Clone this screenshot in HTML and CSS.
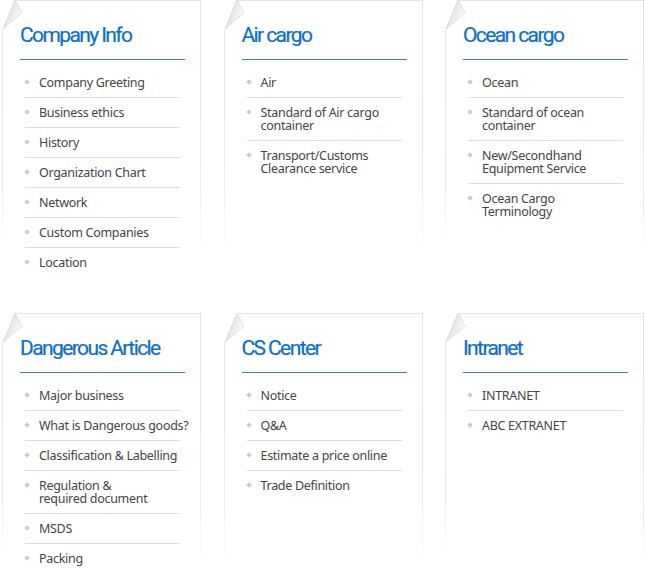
FILE: index.html
```html
<!DOCTYPE html>
<html lang="en">
<head>
    <meta charset="UTF-8">
    <meta name="viewport" content="width=device-width, initial-scale=1.0">
    <title>Sitemap</title>
    <link rel="stylesheet" href="styles.css">
</head>
<body>
    <div class="sitemap">
        <div class="card">
            <svg class="curl" width="21" height="30" viewBox="0 0 21 30"><defs><linearGradient id="fold1" x1="0" y1="0" x2="1" y2="0.6"><stop offset="0" stop-color="#a9a9a9"/><stop offset="0.45" stop-color="#e4e4e4"/><stop offset="1" stop-color="#fff"/></linearGradient></defs><polygon points="0,0 14,0 1,29 0,30" fill="#fff"/><polygon points="13,0 20,13 1,29" fill="url(#fold1)" stroke="#d4d4d4" stroke-width="0.7"/></svg>
            <h2>Company Info</h2>
            <ul>
                <li>Company Greeting</li>
                <li>Business ethics</li>
                <li>History</li>
                <li>Organization Chart</li>
                <li>Network</li>
                <li>Custom Companies</li>
                <li>Location</li>
            </ul>
        </div>
        <div class="card">
            <svg class="curl" width="21" height="30" viewBox="0 0 21 30"><polygon points="0,0 14,0 1,29 0,30" fill="#fff"/><polygon points="13,0 20,13 1,29" fill="url(#fold1)" stroke="#d4d4d4" stroke-width="0.7"/></svg>
            <h2>Air cargo</h2>
            <ul>
                <li>Air</li>
                <li>Standard of Air cargo<br>container</li>
                <li>Transport/Customs<br>Clearance service</li>
            </ul>
        </div>
        <div class="card">
            <svg class="curl" width="21" height="30" viewBox="0 0 21 30"><polygon points="0,0 14,0 1,29 0,30" fill="#fff"/><polygon points="13,0 20,13 1,29" fill="url(#fold1)" stroke="#d4d4d4" stroke-width="0.7"/></svg>
            <h2>Ocean cargo</h2>
            <ul>
                <li>Ocean</li>
                <li>Standard of ocean<br>container</li>
                <li>New/Secondhand<br>Equipment Service</li>
                <li>Ocean Cargo<br>Terminology</li>
            </ul>
        </div>
        <div class="card">
            <svg class="curl" width="21" height="30" viewBox="0 0 21 30"><polygon points="0,0 14,0 1,29 0,30" fill="#fff"/><polygon points="13,0 20,13 1,29" fill="url(#fold1)" stroke="#d4d4d4" stroke-width="0.7"/></svg>
            <h2>Dangerous Article</h2>
            <ul>
                <li>Major business</li>
                <li>What is Dangerous goods?</li>
                <li>Classification &amp; Labelling</li>
                <li>Regulation &amp;<br>required document</li>
                <li>MSDS</li>
                <li>Packing</li>
            </ul>
        </div>
        <div class="card">
            <svg class="curl" width="21" height="30" viewBox="0 0 21 30"><polygon points="0,0 14,0 1,29 0,30" fill="#fff"/><polygon points="13,0 20,13 1,29" fill="url(#fold1)" stroke="#d4d4d4" stroke-width="0.7"/></svg>
            <h2>CS Center</h2>
            <ul>
                <li>Notice</li>
                <li>Q&amp;A</li>
                <li>Estimate a price online</li>
                <li>Trade Definition</li>
            </ul>
        </div>
        <div class="card">
            <svg class="curl" width="21" height="30" viewBox="0 0 21 30"><polygon points="0,0 14,0 1,29 0,30" fill="#fff"/><polygon points="13,0 20,13 1,29" fill="url(#fold1)" stroke="#d4d4d4" stroke-width="0.7"/></svg>
            <h2>Intranet</h2>
            <ul>
                <li>INTRANET</li>
                <li>ABC EXTRANET</li>
            </ul>
        </div>
    </div>
</body>
</html>
```

FILE: styles.css
```css
body {
    margin: 0;
    background-color: #fff;
    font-family: "Noto Sans", Arial, sans-serif;
}

.sitemap {
    display: grid;
    grid-template-columns: repeat(3, 199px);
    column-gap: 22.5px;
    row-gap: 56px;
    padding-left: 2px;
}

.card {
    position: relative;
    box-sizing: border-box;
    height: 257px;
    padding: 0 15px 0 17px;
    border: 1px solid;
    border-image: linear-gradient(#e4e4e4, #ececec 72%, rgba(255, 255, 255, 0) 98%) 1;
}

.curl {
    position: absolute;
    left: -1px;
    top: -1px;
}

.card h2 {
    margin: 0;
    padding: 20px 0 10px;
    border-bottom: 1px solid #3a80cc;
    color: #0a6fca;
    font-family: Roboto, "Noto Sans", sans-serif;
    font-size: 21px;
    font-weight: normal;
    line-height: 28px;
    letter-spacing: -1.6px;
    -webkit-text-stroke: 0.2px #0a6fca;
}

.card ul {
    list-style: none;
    margin: 8px 5px 0;
    padding: 0;
}

.card li {
    position: relative;
    padding: 8px 0 8px 14px;
    border-bottom: 1px solid #dcdcdc;
    color: #444;
    font-size: 12.5px;
    line-height: 13px;
    letter-spacing: -0.3px;
    white-space: nowrap;
}

.card li:last-child {
    border-bottom: none;
}

.card li::before {
    content: "";
    position: absolute;
    left: 0;
    top: 12px;
    width: 4px;
    height: 4px;
    background-color: #cbcbcb;
    transform: rotate(45deg);
}
```
